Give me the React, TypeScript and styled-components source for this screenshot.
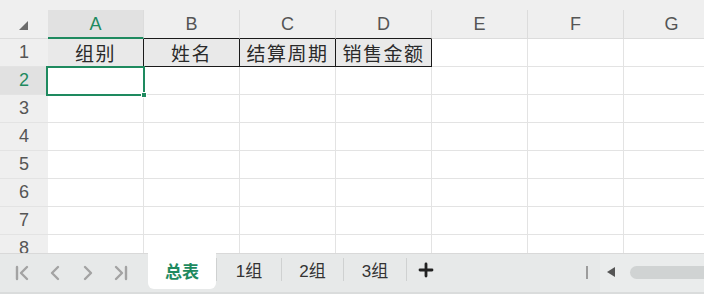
import React from 'react'
import styled, { createGlobalStyle, css } from 'styled-components'

const GREEN = '#1e8a5f'

const GlobalStyle = createGlobalStyle`
  html, body {
    margin: 0;
    padding: 0;
    background: #ffffff;
  }
  * {
    box-sizing: border-box;
  }
`

const columns = ['A', 'B', 'C', 'D', 'E', 'F', 'G']
const header = ['组别', '姓名', '结算周期', '销售金额']
const rows = [1, 2, 3, 4, 5, 6, 7, 8]
const tabs = ['总表', '1组', '2组', '3组']
const tabWidths = [68, 65, 62, 63]

const App: React.FC = () => {
  return (
    <>
      <GlobalStyle />
      <StyledWindow>
        <StyledSheet>
          <StyledCorner>
            <svg width="9" height="9" viewBox="0 0 9 9">
              <polygon points="9,0 9,9 0,9" fill="#6b6b6b" />
            </svg>
          </StyledCorner>
          {columns.map((c, i) => (
            <StyledColHead key={c} active={i === 0} framed={i > 0 && i < 4}>
              {c}
            </StyledColHead>
          ))}
          {rows.map(r => (
            <React.Fragment key={r}>
              <StyledRowHead active={r === 2}>{r}</StyledRowHead>
              {columns.map((c, i) => {
                if (r === 1 && i < 4) {
                  return <StyledTitleCell key={c}>{header[i]}</StyledTitleCell>
                }
                return (
                  <StyledCell key={c} selected={r === 2 && i === 0}>
                    {r === 2 && i === 0 && <StyledHandle />}
                  </StyledCell>
                )
              })}
            </React.Fragment>
          ))}
        </StyledSheet>

        <StyledTabBar>
          <StyledNav>
            <StyledNavBtn>
              <svg width="14" height="16" viewBox="0 0 14 16" fill="none" stroke="#a3a3a3" strokeWidth="2.4" strokeLinecap="round" strokeLinejoin="round">
                <line x1="2" y1="2" x2="2" y2="14" />
                <polyline points="12,2 6,8 12,14" />
              </svg>
            </StyledNavBtn>
            <StyledNavBtn>
              <svg width="10" height="16" viewBox="0 0 10 16" fill="none" stroke="#a3a3a3" strokeWidth="2.4" strokeLinecap="round" strokeLinejoin="round">
                <polyline points="8,2 2,8 8,14" />
              </svg>
            </StyledNavBtn>
            <StyledNavBtn>
              <svg width="10" height="16" viewBox="0 0 10 16" fill="none" stroke="#a3a3a3" strokeWidth="2.4" strokeLinecap="round" strokeLinejoin="round">
                <polyline points="2,2 8,8 2,14" />
              </svg>
            </StyledNavBtn>
            <StyledNavBtn>
              <svg width="14" height="16" viewBox="0 0 14 16" fill="none" stroke="#a3a3a3" strokeWidth="2.4" strokeLinecap="round" strokeLinejoin="round">
                <polyline points="2,2 8,8 2,14" />
                <line x1="12" y1="2" x2="12" y2="14" />
              </svg>
            </StyledNavBtn>
          </StyledNav>

          <StyledTabs>
            {tabs.map((t, i) => (
              <StyledTab key={t} active={i === 0} divider={i > 0} style={{ width: tabWidths[i] }}>
                {t}
              </StyledTab>
            ))}
            <StyledAdd>
              <svg width="16" height="16" viewBox="0 0 16 16" stroke="#222" strokeWidth="2.8" strokeLinecap="round">
                <line x1="8" y1="2" x2="8" y2="14" />
                <line x1="2" y1="8" x2="14" y2="8" />
              </svg>
            </StyledAdd>
          </StyledTabs>

          <StyledSplitter />
          <StyledScrollArea>
            <svg width="9" height="10" viewBox="0 0 9 10">
              <polygon points="8,0 8,10 0,5" fill="#555" />
            </svg>
            <StyledThumb />
          </StyledScrollArea>
        </StyledTabBar>
      </StyledWindow>
    </>
  )
}

const StyledWindow = styled.div`
  width: 704px;
  height: 294px;
  display: flex;
  flex-direction: column;
  overflow: hidden;
  background: #efefef;
  font-family: "Liberation Sans", "Noto Sans CJK SC", sans-serif;
`

const StyledSheet = styled.div`
  flex: 1;
  overflow: hidden;
  padding-top: 10px;
  display: grid;
  grid-template-columns: 48px repeat(7, 96px);
  grid-template-rows: 29px;
  grid-auto-rows: 28px;
  align-content: start;
`

const StyledCorner = styled.div`
  background: #efefef;
  border-bottom: 1px solid #dcdcdc;
  display: flex;
  align-items: flex-end;
  justify-content: flex-end;
  padding: 0 20px 8px 0;
`

const StyledColHead = styled.div<{ active?: boolean; framed?: boolean }>`
  background: ${p => (p.active ? '#e1e1e1' : '#efefef')};
  color: ${p => (p.active ? GREEN : '#555')};
  font-size: 18px;
  display: flex;
  align-items: center;
  justify-content: center;
  border-right: 1px solid #dcdcdc;
  border-bottom: 1px solid ${p => (p.framed ? '#1a1a1a' : '#dcdcdc')};
  ${p =>
    p.active &&
    css`
      border-bottom: 2px solid ${GREEN};
      padding-top: 1px;
    `}
`

const StyledRowHead = styled.div<{ active?: boolean }>`
  background: ${p => (p.active ? '#e1e1e1' : '#efefef')};
  color: ${p => (p.active ? GREEN : '#555')};
  font-size: 18px;
  display: flex;
  align-items: center;
  justify-content: center;
  border-bottom: 1px solid #e3e3e3;
`

const StyledCell = styled.div<{ selected?: boolean }>`
  position: relative;
  background: #ffffff;
  border-right: 1px solid #e3e3e3;
  border-bottom: 1px solid #e3e3e3;
  ${p =>
    p.selected &&
    css`
      z-index: 1;
      &::after {
        content: '';
        position: absolute;
        left: -2px;
        top: -1px;
        right: -2px;
        bottom: -2px;
        border: 2px solid ${GREEN};
      }
    `}
`

const StyledHandle = styled.span`
  position: absolute;
  right: -4px;
  bottom: -4px;
  width: 6px;
  height: 6px;
  background: ${GREEN};
  border: 1px solid #ffffff;
  z-index: 2;
`

const StyledTitleCell = styled.div`
  background: #e9e9e9;
  border-right: 1px solid #1a1a1a;
  border-bottom: 1px solid #1a1a1a;
  font-family: "Noto Sans CJK SC", sans-serif;
  font-size: 19px;
  line-height: 27px;
  color: #2a2a2a;
  text-align: center;
  letter-spacing: 1.5px;
  white-space: nowrap;
`

const StyledTabBar = styled.div`
  height: 41px;
  flex-shrink: 0;
  display: flex;
  align-items: stretch;
  background: #e7e9e9;
  border-top: 1px solid #d9d9d9;
  border-bottom: 2px solid #dadcdc;
`

const StyledNav = styled.div`
  width: 148px;
  display: flex;
  align-items: center;
  padding-left: 15px;
  gap: 19px;
`

const StyledNavBtn = styled.span`
  width: 14px;
  display: flex;
  justify-content: center;
`

const StyledTabs = styled.div`
  display: flex;
  align-items: stretch;
  margin-top: -1px;
`

const StyledTab = styled.div<{ active?: boolean; divider?: boolean }>`
  display: flex;
  align-items: center;
  justify-content: center;
  font-family: "Liberation Sans", "Noto Sans CJK SC", sans-serif;
  font-size: 17px;
  color: ${p => (p.active ? GREEN : '#333')};
  font-weight: ${p => (p.active ? 700 : 400)};
  background: ${p => (p.active ? '#ffffff' : 'transparent')};
  border-radius: ${p => (p.active ? '0 0 6px 6px' : '0')};
  margin-bottom: 3px;
  padding-bottom: 2px;
  ${p =>
    p.divider &&
    css`
      & + & {
        border-left: 1px solid #cfd1d1;
        margin-top: 5px;
        margin-bottom: 11px;
        padding-bottom: 0;
      }
    `}
`

const StyledAdd = styled.div`
  width: 38px;
  display: flex;
  align-items: center;
  justify-content: center;
  border-left: 1px solid #cfd1d1;
  margin: 5px 0 11px;
`

const StyledSplitter = styled.div`
  margin-left: auto;
  width: 14px;
  display: flex;
  align-items: center;
  &::before {
    content: '';
    width: 2px;
    height: 13px;
    background: #9c9c9c;
    margin-bottom: 2px;
  }
`

const StyledScrollArea = styled.div`
  width: 104px;
  display: flex;
  align-items: center;
  gap: 14px;
  padding-left: 7px;
  padding-bottom: 2px;
  background: #eaecec;
`

const StyledThumb = styled.div`
  flex: 1;
  height: 13px;
  border-radius: 7px 0 0 7px;
  background: #d0d3d3;
`

export default App
